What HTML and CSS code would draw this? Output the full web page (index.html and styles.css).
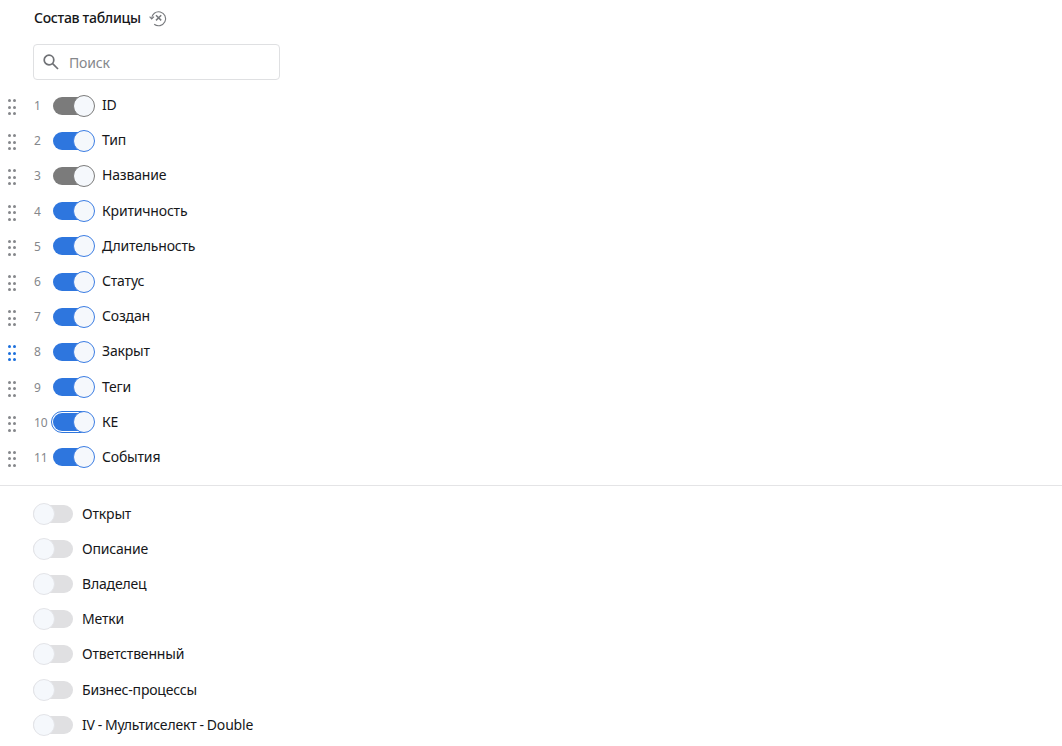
FILE: index.html
```html
<!DOCTYPE html>
<html lang="en">
<head>
    <meta charset="UTF-8">
    <title>Состав таблицы</title>
    <link rel="stylesheet" href="styles.css">
</head>
<body>
    <div class="header">
        <h1>Состав таблицы</h1>
        <svg class="reset-icon" width="18" height="18" viewBox="0 0 18 18" fill="none" stroke="#77797d" stroke-width="1.1">
            <path d="M2.6 9.6A7 7 0 1 1 5.2 15.2"/>
            <path d="M0.6 7.6L2.7 10L5 7.6"/>
            <path d="M7 6.2L12.2 11.4M12.2 6.2L7 11.4" stroke-width="1.5"/>
        </svg>
    </div>

    <div class="search">
        <svg width="18" height="18" viewBox="0 0 18 18" fill="none" stroke="#6f7175" stroke-width="1.7">
            <circle cx="7" cy="7" r="4.8"/>
            <path d="M10.6 10.6L16 16"/>
        </svg>
        <span>Поиск</span>
    </div>

    <div class="list">
        <div class="row">
            <span class="grip"><i></i><i></i><i></i><i></i><i></i><i></i></span>
            <span class="num">1</span>
            <span class="toggle locked"><b></b></span>
            <span class="label">ID</span>
        </div>
        <div class="row">
            <span class="grip"><i></i><i></i><i></i><i></i><i></i><i></i></span>
            <span class="num">2</span>
            <span class="toggle on"><b></b></span>
            <span class="label">Тип</span>
        </div>
        <div class="row">
            <span class="grip"><i></i><i></i><i></i><i></i><i></i><i></i></span>
            <span class="num">3</span>
            <span class="toggle locked"><b></b></span>
            <span class="label">Название</span>
        </div>
        <div class="row">
            <span class="grip"><i></i><i></i><i></i><i></i><i></i><i></i></span>
            <span class="num">4</span>
            <span class="toggle on"><b></b></span>
            <span class="label">Критичность</span>
        </div>
        <div class="row">
            <span class="grip"><i></i><i></i><i></i><i></i><i></i><i></i></span>
            <span class="num">5</span>
            <span class="toggle on"><b></b></span>
            <span class="label">Длительность</span>
        </div>
        <div class="row">
            <span class="grip"><i></i><i></i><i></i><i></i><i></i><i></i></span>
            <span class="num">6</span>
            <span class="toggle on"><b></b></span>
            <span class="label">Статус</span>
        </div>
        <div class="row">
            <span class="grip"><i></i><i></i><i></i><i></i><i></i><i></i></span>
            <span class="num">7</span>
            <span class="toggle on"><b></b></span>
            <span class="label">Создан</span>
        </div>
        <div class="row">
            <span class="grip active"><i></i><i></i><i></i><i></i><i></i><i></i></span>
            <span class="num">8</span>
            <span class="toggle on"><b></b></span>
            <span class="label">Закрыт</span>
        </div>
        <div class="row">
            <span class="grip"><i></i><i></i><i></i><i></i><i></i><i></i></span>
            <span class="num">9</span>
            <span class="toggle on"><b></b></span>
            <span class="label">Теги</span>
        </div>
        <div class="row">
            <span class="grip"><i></i><i></i><i></i><i></i><i></i><i></i></span>
            <span class="num">10</span>
            <span class="toggle on focused"><b></b></span>
            <span class="label">КЕ</span>
        </div>
        <div class="row">
            <span class="grip"><i></i><i></i><i></i><i></i><i></i><i></i></span>
            <span class="num">11</span>
            <span class="toggle on"><b></b></span>
            <span class="label">События</span>
        </div>
    </div>

    <hr class="divider">

    <div class="list hidden-list">
        <div class="row"><span class="toggle off"><b></b></span><span class="label">Открыт</span></div>
        <div class="row"><span class="toggle off"><b></b></span><span class="label">Описание</span></div>
        <div class="row"><span class="toggle off"><b></b></span><span class="label">Владелец</span></div>
        <div class="row"><span class="toggle off"><b></b></span><span class="label">Метки</span></div>
        <div class="row"><span class="toggle off"><b></b></span><span class="label">Ответственный</span></div>
        <div class="row"><span class="toggle off"><b></b></span><span class="label">Бизнес-процессы</span></div>
        <div class="row"><span class="toggle off"><b></b></span><span class="label">IV - Мультиселект - Double</span></div>
    </div>
</body>
</html>
```

FILE: styles.css
```css
html, body {
    height: 746px;
    overflow: hidden;
}
body {
    margin: 0;
    background: #fff;
    color: #16171a;
    font-family: "Noto Sans", "Open Sans", sans-serif;
    font-size: 14px;
    letter-spacing: -0.18px;
    word-spacing: -0.5px;
}
.header {
    display: flex;
    align-items: center;
    height: 36px;
    padding-left: 34px;
}
.header h1 {
    margin: 0 0 1px;
    font-size: 14px;
    font-weight: 500;
    line-height: 36px;
    letter-spacing: -0.3px;
    word-spacing: 0;
}
.reset-icon {
    margin-left: 8px;
}
.search {
    display: flex;
    align-items: center;
    box-sizing: border-box;
    width: 247px;
    height: 36px;
    margin: 8px 0 0 33px;
    padding-left: 8px;
    border: 1px solid #dfe0e2;
    border-radius: 4px;
}
.search span {
    margin-left: 9px;
    color: #85878b;
}
.list {
    margin-top: 8px;
}
.row {
    display: flex;
    align-items: center;
    height: 35.2px;
}
.label {
    padding-bottom: 2px;
}
.hidden-list .label {
    padding-bottom: 1px;
}
.grip {
    display: grid;
    grid-template-columns: 3px 3px;
    grid-auto-rows: 3px;
    gap: 3.5px 2px;
    width: 10px;
    margin: 3px 0 0 8px;
}
.grip i {
    border-radius: 50%;
    background: #85878b;
}
.grip.active i {
    background: #1b6fdc;
}
.num {
    width: 35px;
    padding-left: 16px;
    box-sizing: border-box;
    color: #85878b;
    font-size: 12px;
    letter-spacing: 0;
}
.toggle {
    position: relative;
    flex: none;
    width: 40px;
    height: 18px;
    border-radius: 9px;
}
.toggle b {
    position: absolute;
    top: -2px;
    box-sizing: border-box;
    width: 22px;
    height: 22px;
    border-radius: 50%;
    background: #f5f8fc;
}
.toggle.on, .toggle.locked {
    width: 37px;
    margin-right: 12px;
}
.toggle.on {
    background: #2e76de;
}
.toggle.on b {
    right: -5px;
    border: 1px solid #3b7de3;
}
.toggle.locked {
    background: #7b7b7b;
}
.toggle.locked b {
    right: -5px;
    border: 1px solid #7b7b7b;
}
.toggle.focused {
    outline: 1px solid #2e76de;
    outline-offset: 1px;
}
.toggle.off {
    background: #e0e0e2;
    margin-left: 33px;
    margin-right: 9px;
}
.toggle.off b {
    left: 0;
    border: 1px solid #e3e4e8;
}
.divider {
    height: 1px;
    margin: 10px 0 0;
    border: 0;
    background: #e4e4e6;
}
.hidden-list {
    margin-top: 10px;
}
```
